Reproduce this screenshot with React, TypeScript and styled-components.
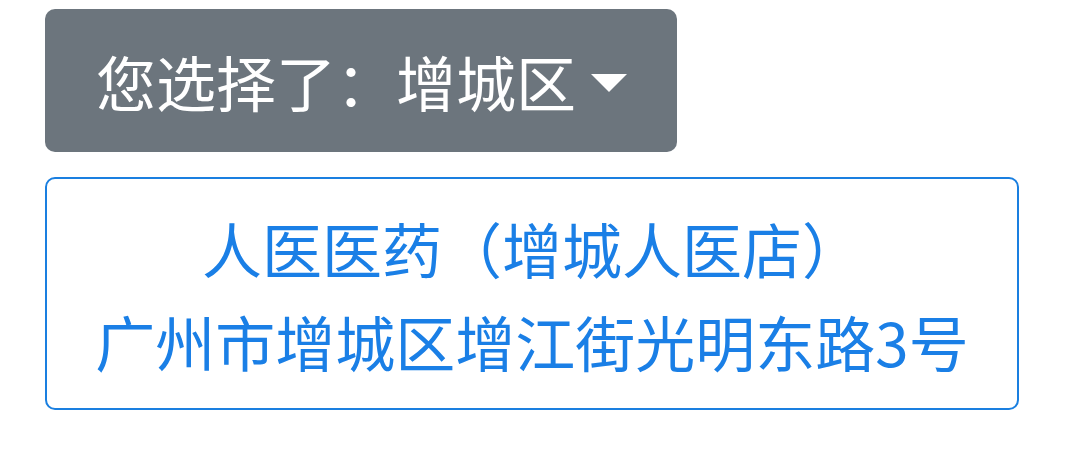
import styled, { createGlobalStyle } from "styled-components";

const GlobalStyle = createGlobalStyle`
  html, body {
    margin: 0;
    padding: 0;
    background: #ffffff;
  }
  body {
    font-family: "Noto Sans CJK SC", "Noto Sans", sans-serif;
  }
`;

const Wrapper = styled.div`
  display: flex;
  flex-direction: column;
  align-items: flex-start;
  gap: 25px;
  padding: 9px 61px 0 45px;
`;

const DropdownToggle = styled.button`
  display: inline-flex;
  align-items: center;
  height: 143px;
  padding: 0 50px 0 51px;
  border: none;
  border-radius: 10px;
  background-color: #6c757d;
  color: #ffffff;
  font-family: inherit;
  font-size: 60px;
  line-height: 90px;
  cursor: pointer;

  &::after {
    content: "";
    display: inline-block;
    margin-left: 15px;
    margin-top: 4px;
    border-top: 18px solid #ffffff;
    border-left: 18px solid transparent;
    border-right: 18px solid transparent;
  }
`;

const StoreCard = styled.div`
  box-sizing: border-box;
  width: 974px;
  height: 233px;
  display: flex;
  flex-direction: column;
  justify-content: center;
  align-items: center;
  border: 2px solid #1a7fe0;
  border-radius: 10px;
  color: #1a7fe6;
  font-size: 60px;
  line-height: 93px;
  text-align: center;
`;

const Line = styled.div`
  white-space: nowrap;
`;

function App() {
  const district = "增城区";
  const store = { name: "人医医药（增城人医店）", address: "广州市增城区增江街光明东路3号" };

  return (
    <Wrapper>
      <GlobalStyle />
      <DropdownToggle>您选择了：{district}</DropdownToggle>
      <StoreCard>
        <Line>{store.name}</Line>
        <Line>{store.address}</Line>
      </StoreCard>
    </Wrapper>
  );
}

export default App;
